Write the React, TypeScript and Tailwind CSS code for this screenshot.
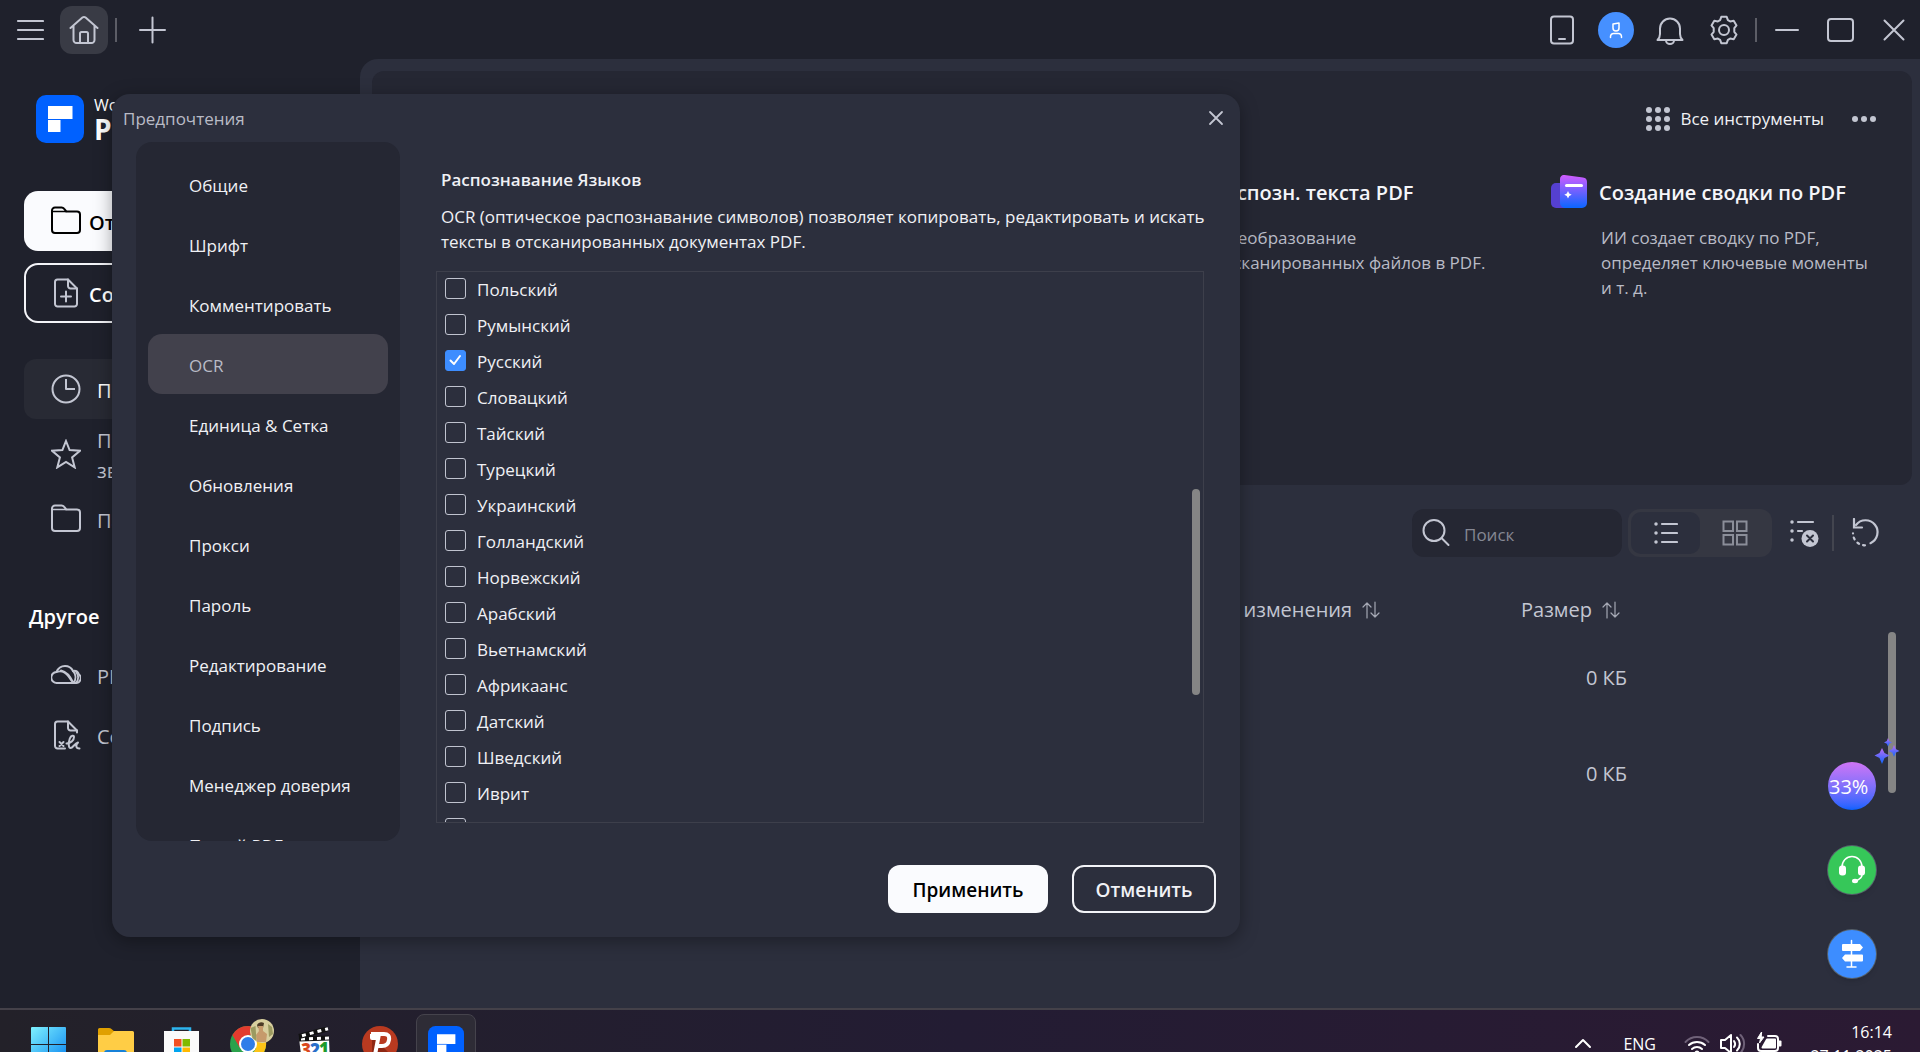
import { ReactNode, useState } from "react";

interface IconProps {
  size?: number;
  className?: string;
  children: ReactNode;
}

function Icon({ size = 30, className = "", children }: IconProps) {
  return (
    <svg
      width={size}
      height={size}
      viewBox={`0 0 ${size} ${size}`}
      fill="none"
      stroke="currentColor"
      strokeWidth={2}
      strokeLinecap="round"
      strokeLinejoin="round"
      className={`shrink-0 ${className}`}
      aria-hidden="true"
    >
      {children}
    </svg>
  );
}

const FolderIcon = () => (
  <Icon>
    <path d="M1 24V4.500a3 3 0 0 1 3-3h6.500a3 3 0 0 1 2.500 1.200l2.300 2.800H26a3 3 0 0 1 3 3V24a3 3 0 0 1-3 3H4a3 3 0 0 1-3-3z" />
    <path d="M1.500 5.500H15" strokeWidth={1.500} />
  </Icon>
);

const NewFileIcon = () => (
  <Icon>
    <path d="M17 1.500H6.500a2.500 2.500 0 0 0-2.500 2.500v22a2.500 2.500 0 0 0 2.500 2.500h17a2.500 2.500 0 0 0 2.500-2.500V10.500z" />
    <path d="M17 1.500V8a2.500 2.500 0 0 0 2.500 2.500H26M15 13.500v10M10 18.500h10" />
  </Icon>
);

const ClockIcon = () => (
  <Icon>
    <circle cx="15" cy="15" r="13.500" />
    <path d="M15 6v9h8" strokeLinecap="square" />
  </Icon>
);

const StarIcon = () => (
  <Icon>
    <path strokeLinejoin="miter" d="M15 2l3.600 9 10.400.8-7.900 6.600 2.600 10L15 23l-8.700 5.400 2.600-10L1 11.800l10.400-.8z" />
  </Icon>
);

const CloudIcon = () => (
  <Icon>
    <path d="M6 23a5.500 5.500 0 0 1-.5-11C7 8.500 10 6 14 6c3.500 0 6.500 2 8 5" />
    <path d="M6 23h19a4.800 4.800 0 0 0 3-8.500C27 12 24.500 10.500 22 11" />
    <path d="M5.500 12c6-2 9.500 1 12 4.500 1.500 2.300 3 4.500 5 6.500M22 11c3 3 3.500 8 .5 12M25.500 12.500c2 3 2.300 7-.5 10.500M10 10.500c5 1 8.500 4 12.500 12.500" strokeWidth={1.800} />
  </Icon>
);

const SignIcon = () => (
  <Icon>
    <path d="M14 28.500H6.500A2.500 2.500 0 0 1 4 26V4a2.500 2.500 0 0 1 2.500-2.500H17l9 9v2" />
    <path d="M17 1.500V8a2.500 2.500 0 0 0 2.500 2.500H26" />
    <path d="M8.500 22l4 4m0-4l-4 4" strokeWidth={2} />
    <path d="M15.500 23.500c4 0 7.500-3 7.500-6.500 0-2-3-1.800-4.200 1.500-1.400 4-1.600 9.500.8 9.500 2.400 0 3.800-4.500 7.400-5.500-2.500 2.500-2.500 6 1.500 6" />
  </Icon>
);

const SortIcon = () => (
  <Icon size={18} className="text-[#a5a8b4]">
    <path strokeWidth={1.200} d="M5 17V2M1 6l4-4 4 4M13 1v15M9 12l4 4 4-4" />
  </Icon>
);

const BrandMark = ({ className = "" }: { className?: string }) => (
  <svg viewBox="0 0 48 48" className={`shrink-0 ${className}`} aria-hidden="true">
    <rect width="48" height="48" rx="10" fill="#0061ff" />
    <path fill="#fff" d="M12 11h24.500v13H24.500v13H12z" />
    <path stroke="#0061ff" strokeWidth="1" d="M12 24.500h13" />
  </svg>
);

const tabs = [
  "Общие",
  "Шрифт",
  "Комментировать",
  "OCR",
  "Единица & Сетка",
  "Обновления",
  "Прокси",
  "Пароль",
  "Редактирование",
  "Подпись",
  "Менеджер доверия",
  "Пустой PDF",
];

const languages = [
  "Польский",
  "Румынский",
  "Русский",
  "Словацкий",
  "Тайский",
  "Турецкий",
  "Украинский",
  "Голландский",
  "Норвежский",
  "Арабский",
  "Вьетнамский",
  "Африкаанс",
  "Датский",
  "Шведский",
  "Иврит",
  "Финский",
];

function TitleBar() {
  return (
    <header className="flex h-[59px] shrink-0 items-center justify-between pl-4 pr-[15px] text-[#c3c6d2]">
      <div className="flex items-center">
        <button aria-label="Меню" className="mr-4">
          <Icon size={28}>
            <path d="M2 5h25M2 14h25M2 23h25" strokeWidth={2.200} />
          </Icon>
        </button>
        <button aria-label="Главная" className="mr-[7px] flex size-12 items-center justify-center rounded-xl bg-[#393b45]">
          <Icon>
            <path d="M1.500 13L13.400 2.600a2.500 2.500 0 0 1 3.200 0L28.500 13M4.500 10.500V25a3 3 0 0 0 3 3h15a3 3 0 0 0 3-3V10.500" />
            <path d="M11 28v-9.500a1.500 1.500 0 0 1 1.500-1.500h5a1.500 1.500 0 0 1 1.500 1.500V28" />
          </Icon>
        </button>
        <span className="h-6 w-0.5 bg-[#5c5d66]" />
        <button aria-label="Новая вкладка" className="ml-[21px]">
          <Icon size={28}>
            <path d="M2 14h25M14.500 1.500v25" />
          </Icon>
        </button>
      </div>

      <div className="flex items-center gap-6">
        <button aria-label="Мобильное приложение">
          <Icon>
            <rect x="4" y="1.500" width="22" height="27" rx="3" />
            <path d="M12 24h6" />
          </Icon>
        </button>
        <button aria-label="Профиль" className="-mx-[3px] flex size-9 items-center justify-center rounded-full bg-[#4690ff] text-white">
          <Icon size={20}>
            <path d="M7 4l6-1v5a3 3 0 0 1-6 0zM4.500 17.500v-1a3 3 0 0 1 3-3h5a3 3 0 0 1 3 3v1" strokeWidth={1.500} />
          </Icon>
        </button>
        <button aria-label="Уведомления">
          <Icon>
            <path d="M2.500 25h25c-1.500-1.500-2.500-3-2.500-6v-5.500a10 10 0 0 0-20 0V19c0 3-1 4.500-2.500 6z" />
            <path d="M11 25.500a4 3.500 0 0 0 8 0" />
          </Icon>
        </button>
        <button aria-label="Настройки">
          <Icon>
            <path d="M12.300 1.800h5.400l1.200 3.400 2.200 1.200 3.600-.7 2.800 4.700-2.200 2.700v3.800l2.200 2.700-2.800 4.700-3.600-.7-2.200 1.200-1.200 3.400h-5.400l-1.200-3.400-2.200-1.200-3.600.7-2.800-4.700 2.200-2.700v-3.800l-2.200-2.700 2.800-4.700 3.600.7 2.200-1.200z" />
            <circle cx="15" cy="15" r="5" />
          </Icon>
        </button>
        <span className="-ml-2 -mr-2 h-6 w-0.5 bg-[#5c5d66]" />
        <button aria-label="Свернуть">
          <Icon>
            <path d="M3 15h22" />
          </Icon>
        </button>
        <button aria-label="Развернуть">
          <Icon>
            <rect x="1" y="4" width="25" height="22" rx="3" />
          </Icon>
        </button>
        <button aria-label="Закрыть окно" className="ml-0.5">
          <Icon size={22}>
            <path d="M1.500 1.500l19 19M20.500 1.500l-19 19" />
          </Icon>
        </button>
      </div>
    </header>
  );
}

function Sidebar() {
  return (
    <aside className="flex w-[360px] shrink-0 flex-col px-6 pt-9 text-xl text-[#c3c6d2]">
      <div className="mb-12 ml-3 flex items-center gap-2.5 text-white">
        <BrandMark className="size-12" />
        <div>
          <div className="text-base leading-5">Wondershare</div>
          <div className="text-[28px] font-bold leading-7">PDFelement</div>
        </div>
      </div>

      <button className="mb-3 flex h-15 items-center gap-2 rounded-[14px] bg-[#fafbfe] pl-[27px] font-semibold text-black">
        <FolderIcon />
        <span className="pt-[3px]">Открыть PDF</span>
      </button>
      <button className="mb-9 flex h-15 items-center gap-2 rounded-[14px] border-2 border-[#f3f4f8] pl-[25px] font-semibold text-white">
        <span className="text-[#c3c6d2]">
          <NewFileIcon />
        </span>
        <span className="pt-[3px]">Создать PDF</span>
      </button>

      <nav className="flex flex-col gap-[5px]">
        <a href="#recent" className="flex h-15 items-center gap-4 rounded-xl bg-[#282a34] pl-[27px] text-white">
          <span className="text-[#c3c6d2]">
            <ClockIcon />
          </span>
          <span className="pt-[3px]">Последние</span>
        </a>
        <a href="#starred" className="flex h-15 items-center gap-4 pl-[27px] leading-[30px]">
          <StarIcon />
          <span className="pt-[3px]">
            Помеченные
            <br />
            звездочкой
          </span>
        </a>
        <a href="#folders" className="flex h-15 items-center gap-4 pl-[27px]">
          <FolderIcon />
          <span className="pt-[3px]">Папки</span>
        </a>
      </nav>

      <h2 className="mb-2.5 mt-[50px] ml-[5px] text-xl font-semibold leading-9 text-white">Другое</h2>
      <nav className="flex flex-col">
        <a href="#cloud" className="flex h-15 items-center gap-4 pl-[27px]">
          <CloudIcon />
          <span className="pt-[3px]">PDFelement Cloud</span>
        </a>
        <a href="#sign" className="flex h-15 items-center gap-4 pl-[27px]">
          <SignIcon />
          <span className="pt-[3px]">Соглашения</span>
        </a>
      </nav>
    </aside>
  );
}

function ToolCard({ title, text, icon }: { title: string; text: string; icon: ReactNode }) {
  return (
    <article className="w-[386px]">
      <div className="flex items-center gap-3">
        {icon}
        <h3 className="whitespace-nowrap text-xl font-semibold leading-9 text-[#f5f6fa]">{title}</h3>
      </div>
      <p className="ml-[50px] mt-3.5 w-[280px] text-[17px] leading-[25px] text-[#b9bbc6]">{text}</p>
    </article>
  );
}

function Tools() {
  return (
    <section className="h-[414px] shrink-0 overflow-hidden rounded-xl bg-[#252733] pt-6">
      <div className="flex h-12 items-center justify-end pr-9 text-[#c3c6d2]">
        <button className="flex items-center gap-2.5 text-[17px] text-[#f0f1f5]">
          <svg width="24" height="24" fill="#c3c6d2" aria-hidden="true">
            {[3, 12, 21].map(y => [3, 12, 21].map(x => <circle key={`${x}-${y}`} cx={x} cy={y} r="3" />))}
          </svg>
          Все инструменты
        </button>
        <button aria-label="Ещё" className="ml-7">
          <svg width="24" height="24" fill="currentColor" aria-hidden="true">
            <circle cx="3" cy="12" r="3" />
            <circle cx="12" cy="12" r="3" />
            <circle cx="21" cy="12" r="3" />
          </svg>
        </button>
      </div>
      <div className="-mr-[25px] mt-8 flex justify-end">
        <ToolCard
          title="Распозн. текста PDF"
          text="Преобразование отсканированных файлов в PDF."
          icon={
            <svg width="36" height="36" className="shrink-0" aria-hidden="true">
              <rect width="36" height="36" rx="6" fill="#4b7bff" />
            </svg>
          }
        />
        <ToolCard
          title="Создание сводки по PDF"
          text="ИИ создает сводку по PDF, определяет ключевые моменты и т. д."
          icon={
            <svg width="36" height="36" className="shrink-0" aria-hidden="true">
              <defs>
                <linearGradient id="summary" x1="0" y1="0" x2="0" y2="1">
                  <stop offset="0" stopColor="#d25cff" />
                  <stop offset="1" stopColor="#0a66ff" />
                </linearGradient>
              </defs>
              <rect x="0" y="8" width="20" height="25" rx="5" fill="#5540d0" />
              <path fill="url(#summary)" d="M9 4a4 4 0 0 1 4.500-4l18.500 2.500a4.500 4.500 0 0 1 4 4.500v21a5 5 0 0 1-5 5H14a5 5 0 0 1-5-5z" />
              <path stroke="#fff" strokeWidth="3" strokeLinecap="round" d="M15.500 10.500h15" />
              <path fill="#fff" d="M17 16l1.200 2.500 2.500 1.200-2.500 1.200-1.200 2.600-1.200-2.600-2.500-1.200 2.500-1.200z" />
            </svg>
          }
        />
      </div>
    </section>
  );
}

function RecentFiles() {
  return (
    <section className="mt-6 text-[#c3c6d2]">
      <div className="flex items-center justify-end pr-8">
        <label className="mr-1.5 flex h-12 w-[210px] items-center gap-3 rounded-xl bg-[#252733] pl-2.5">
          <Icon>
            <circle cx="12" cy="12.500" r="10.500" />
            <path d="M19.500 20l7 7" />
          </Icon>
          <input
            type="search"
            aria-label="Поиск"
            placeholder="Поиск"
            className="w-full min-w-0 bg-transparent pt-[3px] text-[17px] outline-none placeholder:text-[#858894]"
          />
        </label>
        <div className="flex h-12 w-36 items-center rounded-xl bg-[#353742] p-[3px]">
          <button aria-label="Список" className="flex h-full flex-1 items-center justify-center rounded-[10px] bg-[#2c2f3d]">
            <Icon size={24}>
              <path d="M2 3h.01M2 12h.01M2 21h.01" strokeWidth={3.500} />
              <path d="M8 3h15M8 12h15M8 21h15" strokeWidth={2.200} />
            </Icon>
          </button>
          <button aria-label="Плитка" className="flex h-full flex-1 items-center justify-center text-[#8b8e99]">
            <Icon size={26}>
              <path strokeLinejoin="miter" d="M1.500 1.500h9.500v9.500H1.500zM15 1.500h9.500v9.500H15zM1.500 15h9.500v9.500H1.500zM15 15h9.500v9.500H15z" />
            </Icon>
          </button>
        </div>
        <button aria-label="Очистить список" className="ml-[18px]">
          <Icon>
            <path d="M2 4h.01M2 13h.01M2 22h.01" strokeWidth={3.500} />
            <path d="M8 4h15M8 13h4" strokeWidth={2.200} />
            <circle cx="20" cy="20.500" r="8.500" fill="currentColor" stroke="none" />
            <path d="M17 17.500l6 6m0-6l-6 6" stroke="#2c2f3d" />
          </Icon>
        </button>
        <span className="ml-3 h-9 w-0.5 bg-[#43454f]" />
        <button aria-label="Обновить" className="ml-4">
          <Icon>
            <path d="M4 1v8.500h8" strokeLinejoin="miter" strokeWidth={2.200} />
            <path d="M6 7A12 12 0 1 1 20.500 25.200" strokeWidth={2.200} />
            <path d="M15 27.300a12 12 0 0 1-12-12" strokeDasharray="2 4.200" strokeWidth={2.200} />
          </Icon>
        </button>
      </div>

      <table className="mt-[33px] w-full table-fixed text-xl">
        <thead>
          <tr className="h-10">
            <td />
            <th className="w-[328px] p-0 text-left font-normal">
              <span className="flex items-center gap-2.5">
                Дата изменения
                <SortIcon />
              </span>
            </th>
            <th className="w-[106px] p-0 text-left font-normal">
              <span className="flex items-center gap-2.5">
                Размер
                <SortIcon />
              </span>
            </th>
            <td className="w-[285px]" />
          </tr>
        </thead>
        <tbody>
          {[1, 2].map(row => (
            <tr key={row} className="h-24">
              <td colSpan={2} />
              <td className="p-0 text-right">0 КБ</td>
              <td />
            </tr>
          ))}
        </tbody>
      </table>
    </section>
  );
}

function FloatingButtons() {
  return (
    <>
      <div className="absolute right-6 top-[573px] h-[161px] w-2 rounded-full bg-[#858585]" />
      <div className="absolute right-11 top-[703px] flex flex-col gap-9">
        <button className="relative flex size-12 items-center rounded-full bg-linear-to-b from-[#cf74f5] to-[#0061ff] pl-px pt-0.5 text-xl text-white">
          33%
          <svg width="26" height="28" className="absolute -right-6 -top-[26px]" aria-hidden="true">
            <defs>
              <linearGradient id="spark" x1="0" y1="0" x2="0" y2="1">
                <stop offset="0" stopColor="#c06cf5" />
                <stop offset="1" stopColor="#0a66ff" />
              </linearGradient>
            </defs>
            <path fill="url(#spark)" d="M8 12l2.500 5 5 2.500-5 2.500-2.500 6-2.500-6-5-2.500 5-2.500z" />
            <path fill="url(#spark)" d="M20 9l1.700 4 3.800 2-3.800 1.800-1.700 4-1.700-4-3.800-1.800 3.800-2z" />
            <path fill="url(#spark)" d="M14 2l1.200 3L18 6.500l-2.800 1.300L14 10.500l-1.200-2.700L10 6.500 12.800 5z" />
          </svg>
        </button>
        <button aria-label="Поддержка" className="flex size-12 items-center justify-center rounded-full bg-[#36c759] text-white shadow-md ring-1 ring-[#55606a]">
          <Icon>
            <path d="M5 14v-2a10 10.500 0 0 1 20 0v8c0 3-3 4.500-6 6" strokeWidth={1.500} />
            <rect x="2" y="10.500" width="7" height="10" rx="3" fill="currentColor" stroke="none" />
            <rect x="21" y="10.500" width="7" height="10" rx="3" fill="currentColor" stroke="none" />
            <ellipse cx="18" cy="26" rx="3" ry="2.200" fill="currentColor" stroke="none" />
          </Icon>
        </button>
        <button aria-label="Руководство" className="flex size-12 items-center justify-center rounded-full bg-[#3d8dff] text-white shadow-md ring-1 ring-[#55606a]">
          <Icon>
            <path d="M14.500 1.500v26M10 28h9" strokeWidth={1.500} />
            <path d="M6 5h17l3 3.500-3 3.500H6a1 1 0 0 1-1-1V6a1 1 0 0 1 1-1zM25 15.500H8l-3 3.500 3 3.500h17a1 1 0 0 0 1-1v-5a1 1 0 0 0-1-1z" fill="currentColor" stroke="none" />
          </Icon>
        </button>
      </div>
    </>
  );
}

function PreferencesDialog() {
  const [tab, setTab] = useState("OCR");
  const [checked, setChecked] = useState<string[]>(["Русский"]);

  const toggle = (lang: string) => {
    setChecked(checked.includes(lang) ? checked.filter(l => l !== lang) : [...checked, lang]);
  };

  return (
    <div
      role="dialog"
      aria-labelledby="prefs-title"
      className="absolute left-28 top-[94px] w-[1128px] rounded-[18px] bg-[#2c2f3d] pb-6 text-[17px] text-[#f0f1f5] shadow-[0_4px_18px_rgba(0,0,0,0.35)]"
    >
      <div className="flex h-12 items-center justify-between pl-[11px] pr-3.5">
        <h1 id="prefs-title" className="pt-0.5 text-[#b9bbc6]">
          Предпочтения
        </h1>
        <button aria-label="Закрыть" className="text-[#c3c6d2]">
          <Icon size={20}>
            <path d="M4 4l12 12M16 4L4 16" strokeWidth={1.800} />
          </Icon>
        </button>
      </div>

      <div className="flex px-6">
        <div className="h-[699px] w-[264px] shrink-0 overflow-hidden rounded-2xl bg-[#252733] p-3">
          {tabs.map(name => (
            <button
              key={name}
              onClick={() => setTab(name)}
              className={
                name === tab
                  ? "flex h-15 w-full items-center rounded-[14px] bg-[#42414c] pl-[41px] pt-[3px] text-[#b9bbc6]"
                  : "flex h-15 w-full items-center rounded-[14px] pl-[41px] pt-[3px]"
              }
            >
              {name}
            </button>
          ))}
        </div>

        <div className="ml-9 flex-1 pt-[25px]">
          <h2 className="ml-[5px] font-semibold leading-[26px]">Распознавание Языков</h2>
          <p className="ml-[5px] mt-[11px] leading-[25px]">
            OCR (оптическое распознавание символов) позволяет копировать, редактировать и искать тексты в отсканированных документах PDF.
          </p>
          <div className="relative mr-3 mt-[17px] h-[552px] overflow-hidden border border-[#3d3f4b]">
            {languages.map(lang => (
              <label key={lang} className="flex h-9 items-start gap-[11px] pl-2 pt-1.5 leading-6">
                <span className="relative flex size-[21px] shrink-0">
                  <input
                    type="checkbox"
                    checked={checked.includes(lang)}
                    onChange={() => toggle(lang)}
                    className="peer size-[21px] appearance-none rounded-[3px] border border-[#c0c3cf] checked:border-[#3d8dff] checked:bg-[#3d8dff]"
                  />
                  <svg viewBox="0 0 21 21" className="absolute inset-0 hidden peer-checked:block" fill="none" aria-hidden="true">
                    <path d="M5.500 10.500l3.500 3.500 6-8" stroke="#fff" strokeWidth="2" strokeLinecap="round" strokeLinejoin="round" />
                  </svg>
                </span>
                {lang}
              </label>
            ))}
            <div className="absolute right-[3px] top-[217px] h-[206px] w-2 rounded-full bg-[#858585]" />
          </div>
        </div>
      </div>

      <div className="mt-6 flex justify-end gap-6 pr-6 text-[19px] font-semibold">
        <button className="h-12 w-40 rounded-xl bg-[#fafbfe] pt-[3px] text-black">Применить</button>
        <button className="h-12 w-36 rounded-xl border-2 border-[#f3f4f8] pt-[3px]">Отменить</button>
      </div>
    </div>
  );
}

function Taskbar() {
  return (
    <footer className="flex h-11 shrink-0 items-start justify-between overflow-hidden border-t-2 border-[#444149] bg-linear-to-r from-[#232129] via-[#231c33] to-[#2b1a33] pl-[31px] pr-7 text-white">
      <div className="flex items-start gap-[30px]">
        <button aria-label="Пуск" className="mt-[17px]">
          <svg width="36" height="36" aria-hidden="true">
            <defs>
              <linearGradient id="win" x1="0" y1="0" x2="1" y2="1">
                <stop offset="0" stopColor="#7ff2ff" />
                <stop offset="1" stopColor="#0a84f0" />
              </linearGradient>
            </defs>
            <path fill="url(#win)" d="M0 1a1 1 0 0 1 1-1h16v17H0zM18 0h16a1 1 0 0 1 1 1v16H18zM0 18h17v17H0zM18 18h17v17H18z" />
          </svg>
        </button>
        <button aria-label="Проводник" className="mt-[17px]">
          <svg width="37" height="36" aria-hidden="true">
            <path fill="#e0a000" d="M1 2.500A1.500 1.500 0 0 1 2.500 1H12a4 4 0 0 1 2.500 1L18 5v5H1z" />
            <path fill="#ffcd45" d="M1 8h12l4-4h18.500a1.500 1.500 0 0 1 1.500 1.500V34H1z" />
            <path fill="#1681d8" d="M7 36V26a3 3 0 0 1 3-3h17a3 3 0 0 1 3 3v10z" />
          </svg>
        </button>
        <button aria-label="Магазин" className="mt-[17px]">
          <svg width="36" height="36" aria-hidden="true">
            <path fill="none" stroke="#2db4ee" strokeWidth="2.500" d="M9 7V1.500h17V7" />
            <path fill="#fafafa" d="M0 4h35v31H0z" />
            <path fill="#f25022" d="M10 12h7.500v7.500H10z" />
            <path fill="#7fba00" d="M18.500 12H26v7.500h-7.500z" />
            <path fill="#00a4ef" d="M10 20.500h7.500V28H10z" />
            <path fill="#ffb900" d="M18.500 20.500H26V28h-7.500z" />
          </svg>
        </button>
        <button aria-label="Chrome" className="mt-[9px]">
          <svg width="46" height="44" aria-hidden="true">
            <circle cx="18" cy="25" r="18" fill="#2ba24c" />
            <path fill="#e33b2e" d="M2.400 16A18 18 0 0 1 33.600 16H18l-7.800 13.500z" />
            <path fill="#fdc316" d="M33.600 16A18 18 0 0 1 18 43l7.800-13.500L26 16z" />
            <circle cx="18" cy="25" r="9" fill="#fff" />
            <circle cx="18" cy="25" r="7" fill="#2f7de9" />
            <circle cx="32" cy="12" r="12" fill="#d8cf9e" />
            <path fill="#4c3b26" d="M27 6a4.500 4 0 0 1 7-2l-1 5h-5z" />
            <path fill="#c69a6c" d="M28 7h5v5l4 3-1 8h-9l-1-7 3-4z" />
            <path fill="#9b9a60" d="M20.500 9l5-2 1 15-4-3zM38 5l4 3 1 7-4 3z" />
          </svg>
        </button>
        <button aria-label="Media Player Classic" className="-ml-2 mt-[17px]">
          <svg width="34" height="36" aria-hidden="true">
            <path fill="#fff" d="M1 11l30 1 1 24H4z" />
            <path stroke="#111" strokeWidth="5" d="M1 12l30-1" />
            <path stroke="#fff" strokeWidth="3" strokeDasharray="4 4" d="M3 12l28-1" />
            <path stroke="#111" strokeWidth="5" d="M1 9.500l28-7.500" />
            <path stroke="#fff" strokeWidth="3" strokeDasharray="4 4" d="M4 8.700L30 1.700" />
            <g fontFamily="Open Sans, sans-serif" fontWeight="800" fontSize="17">
              <text x="3" y="29" fill="#d9481c">3</text>
              <text x="12" y="29" fill="#2a6fc9">2</text>
              <text x="21" y="28" fill="#1f9a2c">1</text>
            </g>
          </svg>
        </button>
        <button aria-label="Psiphon" className="mt-4">
          <svg width="36" height="36" aria-hidden="true">
            <circle cx="18" cy="18" r="18" fill="#b93a20" />
            <path fill="#8f2713" d="M10 10l18 18-6 7-12-3z" />
            <path fill="none" stroke="#fff" strokeWidth="4" strokeLinejoin="round" d="M9 8h13q6 0 5 6t-7 6h-7M17 8l-5 26M10 8v4h5" />
          </svg>
        </button>
        <button aria-label="PDFelement" className="-ml-3 mt-1 flex h-14 w-15 justify-center rounded-lg border border-[#45434c] bg-[#2e2c36] pt-[11px]">
          <BrandMark className="size-9" />
        </button>
      </div>

      <div className="flex items-start text-base">
        <Icon size={18} className="mr-[31px] mt-[25px]">
          <path d="M2 12l7-7 7 7" />
        </Icon>
        <span className="mr-7 mt-[22px] leading-6">ENG</span>
        <Icon size={26} className="mr-2.5 mt-[23px]">
          <path d="M1.500 9a16 16 0 0 1 23 0" stroke="#6f6178" />
          <path d="M5 12a12 12 0 0 1 16 0M8 16a7.500 7.500 0 0 1 10 0" />
          <circle cx="13" cy="20" r="1.500" fill="currentColor" />
        </Icon>
        <Icon size={26} className="mr-2.5 mt-[21px]">
          <path d="M1 9h4l6-5v18l-6-5H1z" />
          <path d="M14 10a5 5 0 0 1 0 6M17 6.500a9 9 0 0 1 0 13" />
          <path d="M20.500 4a13 13 0 0 1 0 18" stroke="#6f6178" />
        </Icon>
        <Icon size={26} className="mr-6 mt-[22px]">
          <path d="M12 4h7a3 3 0 0 1 3 3v9a3 3 0 0 1-3 3H5a3 3 0 0 1-3-3v-4" />
          <path d="M11 7.500h8v8H6.500z" fill="currentColor" />
          <path d="M23 9.500h1.500v4H23z" fill="currentColor" />
          <path d="M5.500 0L1.500 6.500h3L3.500 11 8 5H5.500z" fill="currentColor" strokeWidth={1} />
        </Icon>
        <div className="w-[86px] pt-2.5 text-right leading-6">
          16:14
          <br />
          27.11.2025
        </div>
      </div>
    </footer>
  );
}

export default function App() {
  return (
    <div className="relative flex h-screen flex-col overflow-hidden bg-[#1f212c] font-['Open_Sans','Noto_Sans',sans-serif]">
      <TitleBar />
      <div className="flex min-h-0 flex-1">
        <Sidebar />
        <main className="relative flex min-w-0 flex-1 flex-col overflow-hidden rounded-tl-[18px] bg-[#2c2f3d] pl-3 pr-2 pt-3">
          <Tools />
          <RecentFiles />
          <FloatingButtons />
        </main>
      </div>
      <Taskbar />
      <PreferencesDialog />
    </div>
  );
}
